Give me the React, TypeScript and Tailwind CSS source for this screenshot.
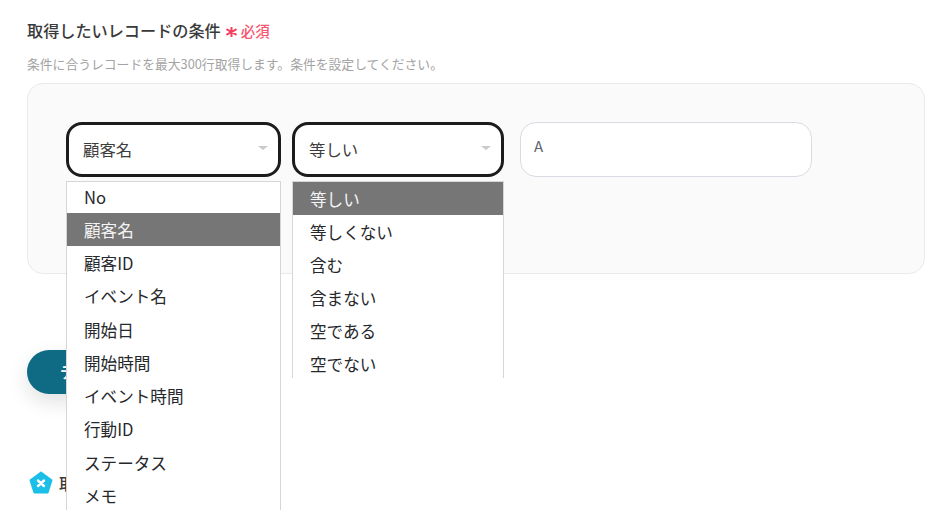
import React from "react";

const fieldOptions = ["No", "顧客名", "顧客ID", "イベント名", "開始日", "開始時間", "イベント時間", "行動ID", "ステータス", "メモ"];
const operatorOptions = ["等しい", "等しくない", "含む", "含まない", "空である", "空でない"];

function Caret() {
  return <div className="-mt-[3px] h-0 w-0 border-x-[5.5px] border-t-[4.5px] border-x-transparent border-t-[#c8cacd]" />;
}

function RequiredMark() {
  return (
    <svg width="11" height="10" viewBox="0 0 11 10" className="ml-[5px] mt-[4px] shrink-0">
      <path d="M5.5 0.5v9M1.2 2.6l8.6 4.8M9.8 2.6l-8.6 4.8" stroke="#f43f5e" strokeWidth="2" strokeLinecap="round" />
    </svg>
  );
}

function SelectBox({ label, widthClass }: { label: string; widthClass: string }) {
  return (
    <div className={`flex h-[55px] items-center justify-between rounded-[16px] border-[3px] border-[#1c1c1c] bg-white pl-[14px] pr-[10px] text-[16.4px] text-[#3d3d3d] ${widthClass}`}>
      <span className="-mt-px">{label}</span>
      <Caret />
    </div>
  );
}

function OptionList({ options, selected, className, rowClass }: { options: string[]; selected: string; className: string; rowClass: string }) {
  return (
    <div className={`absolute z-10 overflow-hidden border-x border-t border-[#d6d6d6] bg-white ${className}`}>
      {options.map((option) => (
        <div
          key={option}
          className={`flex items-center pl-[17px] pt-[2px] text-[16.6px] ${rowClass} ${option === selected ? "bg-[#767676] text-[#f4f4f4]" : "text-[#26282c]"}`}
        >
          {option}
        </div>
      ))}
    </div>
  );
}

export default function App() {
  return (
    <div className="h-[523px] w-[952px] overflow-hidden bg-white pl-[27px] pr-[27px] pt-[19px] font-['Noto_Sans_CJK_JP','Noto_Sans',sans-serif]">
      <div className="flex h-[22px] items-center">
        <span className="text-[16.15px] font-medium leading-[22px] text-[#3a3a3a]">取得したいレコードの条件</span>
        <RequiredMark />
        <span className="ml-[4px] mt-[2px] text-[14.5px] font-medium leading-[18px] text-[#f9556f]">必須</span>
      </div>
      <p className="mt-[14px] text-[12.8px] leading-[18px] text-[#a3a3a3]">条件に合うレコードを最大300行取得します。条件を設定してください。</p>

      <div className="mt-[10px] h-[191px] w-[898px] rounded-[16px] border border-[#e8eaed] bg-[#fafafa] pl-[38px] pt-[38px]">
        <div className="flex items-start">
          <div className="relative">
            <SelectBox label="顧客名" widthClass="w-[215px]" />
            <OptionList options={fieldOptions} selected="顧客名" className="left-0 top-[59px] h-[329px] w-[215px] [&>div:first-child]:-mt-[2.5px]" rowClass="h-[33.25px]" />
          </div>
          <div className="relative ml-[11px]">
            <SelectBox label="等しい" widthClass="w-[212px]" />
            <OptionList options={operatorOptions} selected="等しい" className="left-0 top-[59px] h-[197px] w-[212px]" rowClass="h-[33px]" />
          </div>
          <div className="ml-[16px] h-[55px] w-[292px] rounded-[16px] border border-[#d8dce2] bg-white pl-[13px] pt-[12px] text-[15px] leading-[22px] text-[#5f6470]">A</div>
        </div>
      </div>

      <div className="mt-[76px] flex h-[44px] w-[150px] items-center rounded-full bg-[#0f6a84] pl-[33px] text-[15px] font-bold text-white shadow-[0_8px_20px_rgba(0,0,0,0.12)]">
        テスト
      </div>

      <div className="mt-[77px] flex items-center pl-[2px]">
        <svg width="24" height="24" viewBox="0 0 24 24" className="shrink-0">
          <path d="M12 1.5 22.5 9.2 18.6 21.5H5.4L1.5 9.2Z" fill="#1bbfe8" stroke="#1bbfe8" strokeWidth="2" strokeLinejoin="round" />
          <path d="M9 9.5l6 5.5M15 9.5l-6 5.5" stroke="#fff" strokeWidth="2.4" strokeLinecap="round" />
        </svg>
        <span className="ml-[6px] text-[16px] font-medium text-[#3a3a3a]">取得した値</span>
      </div>
    </div>
  );
}
